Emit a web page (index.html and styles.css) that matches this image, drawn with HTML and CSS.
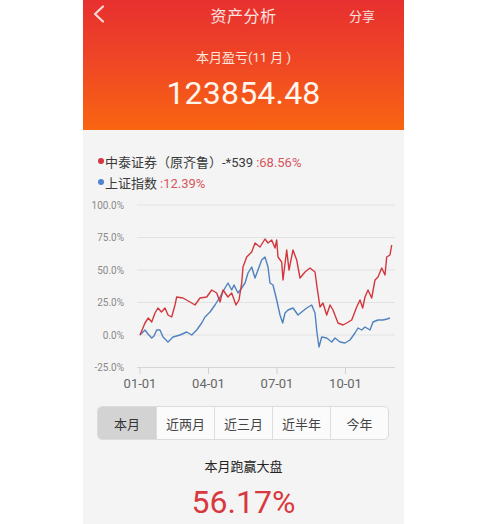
FILE: index.html
```html
<!DOCTYPE html>
<html lang="zh">
<head>
<meta charset="utf-8">
<title>资产分析</title>
<link rel="stylesheet" href="styles.css">
</head>
<body>
<div class="app">
  <header class="header">
    <div class="topbar">
      <div class="left">
        <svg class="back" width="14" height="18" viewBox="0 0 14 18"><polyline points="11,1.5 3,9 11,16.5" fill="none" stroke="#fbd9d9" stroke-width="2.2" stroke-linecap="round" stroke-linejoin="round"/></svg>
      </div>
      <div class="title">资产分析</div>
      <div class="right"><span class="share">分享</span></div>
    </div>
    <div class="month-label">本月盈亏(11 月 )</div>
    <div class="month-value">123854.48</div>
  </header>

  <main class="content">
    <div class="legend">
      <div class="legend-row"><span class="dot red"></span>中泰证券（原齐鲁）-*539 <span class="val">:68.56%</span></div>
      <div class="legend-row"><span class="dot blue"></span>上证指数 <span class="val">:12.39%</span></div>
    </div>

    <svg class="chart" width="321" height="200" viewBox="83 194 321 200">
      <g stroke="#e2e2e2" stroke-width="1">
        <line x1="137" y1="205" x2="395" y2="205"/>
        <line x1="137" y1="237.5" x2="395" y2="237.5"/>
        <line x1="137" y1="270" x2="395" y2="270"/>
        <line x1="137" y1="302.5" x2="395" y2="302.5"/>
        <line x1="137" y1="335" x2="395" y2="335"/>
      </g>
      <line x1="137" y1="367.5" x2="395" y2="367.5" stroke="#d6d6d6" stroke-width="1"/>
      <g stroke="#d0d0d0" stroke-width="1">
        <line x1="140" y1="367.5" x2="140" y2="374"/>
        <line x1="208.5" y1="367.5" x2="208.5" y2="374"/>
        <line x1="277" y1="367.5" x2="277" y2="374"/>
        <line x1="345.5" y1="367.5" x2="345.5" y2="374"/>
      </g>
      <g class="ylab" text-anchor="end">
        <text x="124" y="208.5">100.0%</text>
        <text x="124" y="241">75.0%</text>
        <text x="124" y="273.5">50.0%</text>
        <text x="124" y="306">25.0%</text>
        <text x="124" y="338.5">0.0%</text>
        <text x="124" y="371">-25.0%</text>
      </g>
      <g class="xlab" text-anchor="middle">
        <text x="140" y="388">01-01</text>
        <text x="208.5" y="388">04-01</text>
        <text x="277" y="388">07-01</text>
        <text x="345.5" y="388">10-01</text>
      </g>
      <polyline fill="none" stroke="#4f82bf" stroke-width="1.4" stroke-linejoin="round" points="140,335 145,330 148,334 151.7,338 154,336 156.7,330 160,330 163,337 168,342 173,337 180,335 186.7,332 191.7,335 196.7,330 201.7,323 205,317 210,312 215,305 220,297 225,288 228,283 231.7,290 234,285 238,293 241.7,288 245,283 248,273 251.7,267 255,278 258,270 261.7,260 265,257 268,267 270,283 273,285 276.7,300 280,315 282.7,323 285,313 288,310 293,308 298,315 301.7,312 306.7,308 311.7,305 315,313 317,333 319,347 321.7,337 326.7,338 331.7,342 335,338 340,342 345,343 350,340 355,333 358,328 361.7,330 365,327 370,330 373,322 378,320 383,320 387,319 390,318"/>
      <polyline fill="none" stroke="#d2373d" stroke-width="1.4" stroke-linejoin="round" points="140,335 145,323 148.3,318 151.7,322 155,313 158,308 161.5,312 165,308 168,315 171.7,317 175,305 176.7,297 183,298 190,302 195,305 200,298 206.7,297 211.7,290 216.7,293 220,302 223,290 228,297 231.7,293 236,305 239,300 241.7,283 243,267 246.7,257 251.7,252 255,243 260,247 265,239 268,243 271.7,240 275,248 276.7,240 278,257 281.7,262 283,280 286.7,250 289,270 293,250 296.7,260 300,278 305,272 310,268 315,272 317,287 320,307 323,303 326.7,315 330,305 333,310 338,323 343,325 346.7,323 351.7,320 356.7,307 360,300 362.7,308 365,297 368,290 371.7,298 375,280 378,277 381.7,268 385,275 386.7,257 390,255 391.7,245"/>
    </svg>

    <div class="tabs">
      <div class="tab active">本月</div>
      <div class="tab">近两月</div>
      <div class="tab">近三月</div>
      <div class="tab">近半年</div>
      <div class="tab">今年</div>
    </div>

    <div class="beat-label">本月跑赢大盘</div>
    <div class="beat-value">56.17%</div>
  </main>
</div>
</body>
</html>
```
FILE: styles.css
```css
html, body {
  margin: 0;
  padding: 0;
  background: #ffffff;
}
body {
  font-family: Roboto, "Noto Sans CJK SC", sans-serif;
  height: 524px;
  overflow: hidden;
}
.app {
  width: 321px;
  margin-left: 83px;
  height: 524px;
  display: flex;
  flex-direction: column;
}
.header {
  height: 130px;
  background: linear-gradient(180deg, #e7302f 0%, #ef4526 45%, #f96511 100%);
  color: #fff;
  display: flex;
  flex-direction: column;
  align-items: center;
}
.topbar {
  width: 100%;
  height: 30px;
  display: grid;
  grid-template-columns: 1fr auto 1fr;
  align-items: center;
}
.left {
  padding-left: 9px;
  display: flex;
  align-items: center;
}
.back {
  display: block;
  margin-top: -2px;
}
.title {
  font-size: 16px;
  color: #fbe3e0;
  letter-spacing: 0.5px;
}
.right {
  display: flex;
  justify-content: flex-end;
  padding-right: 29px;
}
.share {
  font-size: 13px;
  color: #fbe3e0;
}
.month-label {
  margin-top: 18px;
  height: 20px;
  line-height: 20px;
  font-size: 13px;
  color: #fde6dc;
}
.month-value {
  margin-top: 5px;
  height: 40px;
  line-height: 40px;
  font-size: 32px;
  color: #fff6ee;
  letter-spacing: 0.2px;
}
.content {
  flex: 1;
  background: #f4f4f4;
  display: flex;
  flex-direction: column;
}
.legend {
  padding-top: 22px;
  padding-left: 15px;
}
.legend-row {
  height: 21px;
  line-height: 21px;
  font-size: 13px;
  color: #3a3a3a;
  display: flex;
  align-items: center;
}
.dot {
  width: 6px;
  height: 6px;
  border-radius: 50%;
  margin-right: 1px;
  margin-top: -3px;
}
.dot.red { background: #d2373d; }
.dot.blue { background: #4f82cf; }
.val {
  color: #d65660;
  margin-left: 3px;
}
.chart {
  display: block;
}
.ylab {
  font-size: 10px;
  fill: #8a8a8a;
}
.xlab {
  font-size: 13px;
  fill: #666;
}
.tabs {
  margin: 12px 15px 0 14px;
  height: 34px;
  display: grid;
  grid-template-columns: repeat(5, 1fr);
  border: 1px solid #dcdcdc;
  border-radius: 5px;
  background: #fbfbfb;
  overflow: hidden;
  box-sizing: border-box;
}
.tab {
  display: flex;
  align-items: center;
  justify-content: center;
  font-size: 13px;
  color: #444;
  border-left: 1px solid #dedede;
}
.tab:first-child {
  border-left: none;
}
.tab.active {
  background: #d3d3d3;
  color: #333;
}
.beat-label {
  margin-top: 17px;
  height: 20px;
  line-height: 20px;
  text-align: center;
  font-size: 13px;
  color: #222;
}
.beat-value {
  margin-top: 7px;
  height: 36px;
  line-height: 36px;
  text-align: center;
  font-size: 32px;
  color: #d8393f;
}
```
